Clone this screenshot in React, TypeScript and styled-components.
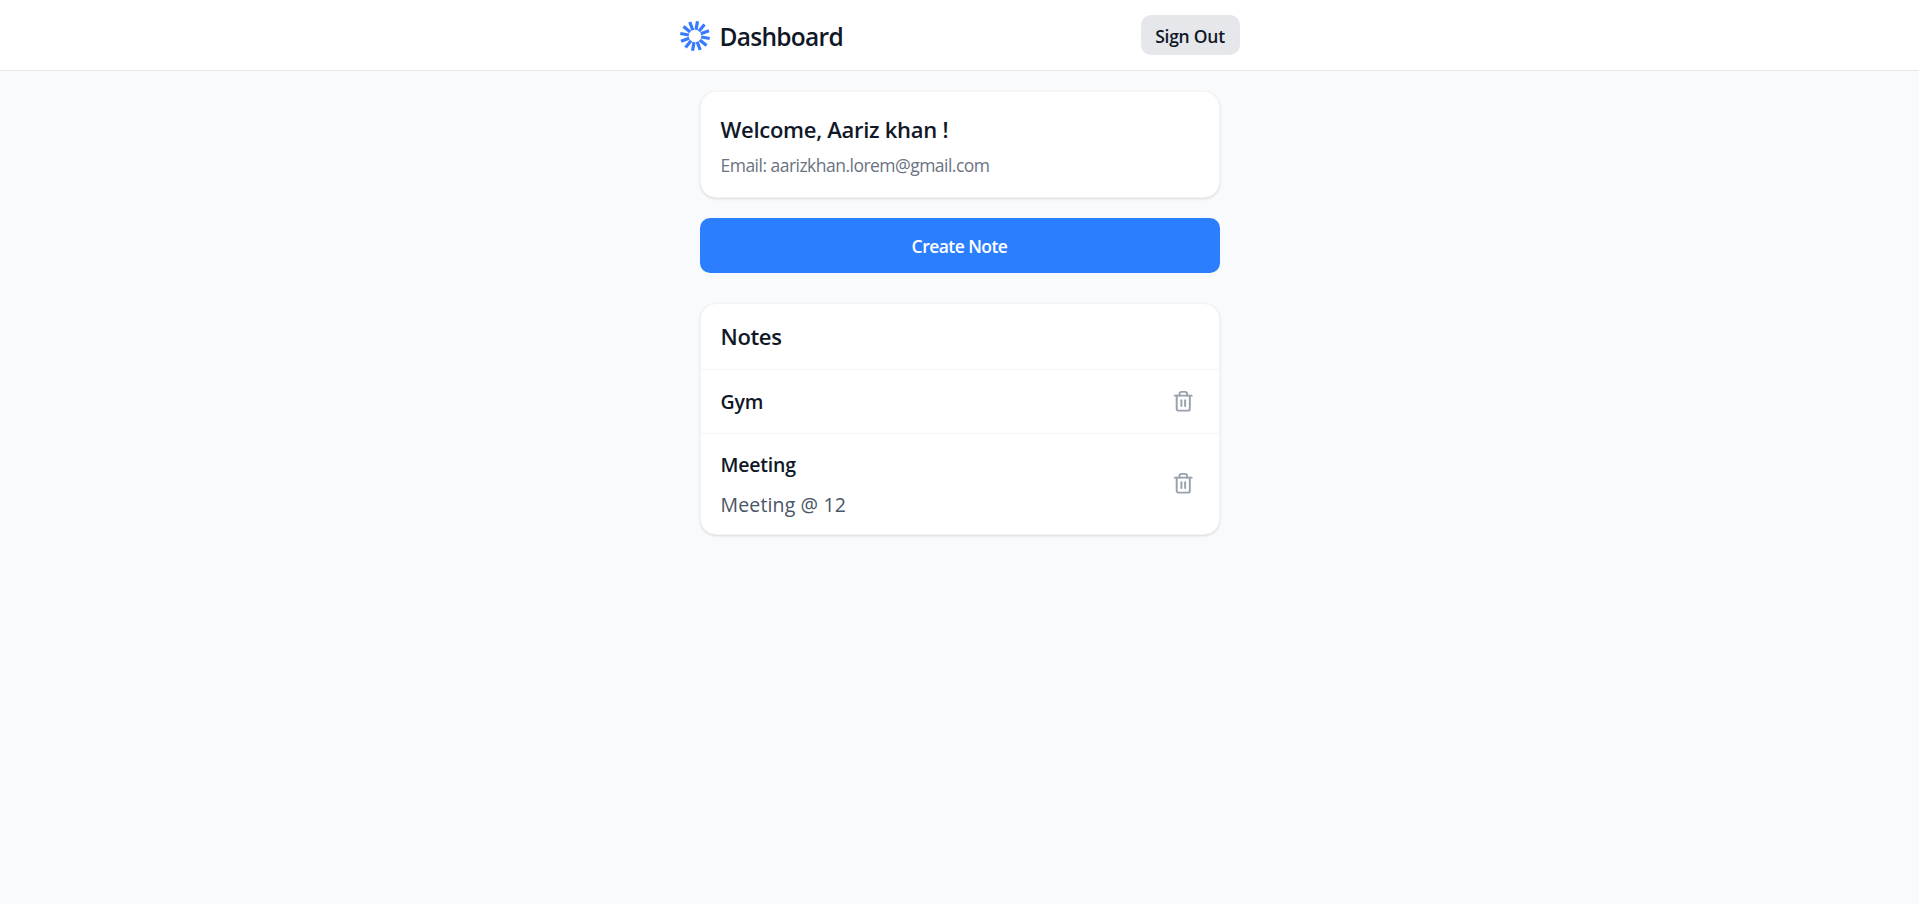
import React from "react";
import styled, { createGlobalStyle } from "styled-components";
import { Trash2 } from "lucide-react";

const GlobalStyle = createGlobalStyle`
  *, *::before, *::after { box-sizing: border-box; }
  body {
    margin: 0;
    background: #f9fafb;
    color: #101828;
    font-family: "Segoe UI", "Open Sans", "Noto Sans", sans-serif;
  }
  h1, h2, h3, p, ul { margin: 0; padding: 0; }
  button { font: inherit; border: 0; cursor: pointer; }
`;

const Page = styled.div`
  min-height: 100vh;
`;

const Header = styled.header`
  background: #fff;
  border-bottom: 1px solid #e5e7eb;
`;

const HeaderInner = styled.div`
  width: 560px;
  height: 70px;
  margin: 0 auto;
  display: flex;
  align-items: center;
  justify-content: space-between;
`;

const Brand = styled.div`
  display: flex;
  align-items: center;
  gap: 10px;
  padding-top: 2px;
`;

const Title = styled.h1`
  padding-top: 2px;
  font-size: 24.5px;
  line-height: 36px;
  font-weight: 600;
  letter-spacing: -0.72px;
`;

const SignOutButton = styled.button`
  width: 99px;
  height: 40px;
  padding: 2px 0 0;
  border-radius: 10px;
  background: #e5e7eb;
  color: #101828;
  font-size: 17.5px;
  font-weight: 600;
  letter-spacing: -0.25px;
`;

const Main = styled.main`
  width: 560px;
  margin: 0 auto;
  padding: 20px;
  display: flex;
  flex-direction: column;
`;

const Card = styled.section`
  background: #fff;
  border: 1px solid #f3f4f6;
  border-radius: 16px;
  box-shadow: 0 1px 3px rgba(0, 0, 0, 0.1), 0 1px 2px -1px rgba(0, 0, 0, 0.1);
  overflow: hidden;
`;

const WelcomeCard = styled(Card)`
  height: 107px;
  padding: 20px;
`;

const Welcome = styled.h2`
  font-size: 22px;
  line-height: 34px;
  font-weight: 600;
  letter-spacing: -0.28px;
`;

const Email = styled.p`
  margin-top: 6px;
  font-size: 17.5px;
  line-height: 27px;
  letter-spacing: -0.52px;
  color: #6a7282;
`;

const CreateButton = styled.button`
  height: 55px;
  margin: 20px 0 30px;
  padding: 1px 0 0;
  border-radius: 10px;
  background: #2b7fff;
  color: #fff;
  font-size: 17.5px;
  font-weight: 600;
  letter-spacing: -0.55px;
`;

const NotesHeading = styled.h2`
  height: 65px;
  padding: 0 20px 2px;
  display: flex;
  align-items: center;
  font-size: 22px;
  font-weight: 600;
  letter-spacing: -0.35px;
`;

const NoteList = styled.ul`
  list-style: none;
`;

const NoteRow = styled.li`
  display: flex;
  align-items: center;
  justify-content: space-between;
  padding: 15px 20px;
  border-top: 1px solid #f3f4f6;
`;

const NoteTitle = styled.h3<{ $alone: boolean }>`
  padding: ${({ $alone }) => ($alone ? "1px 0 0" : "0 0 1px")};
  font-size: 19.5px;
  line-height: 32px;
  font-weight: 600;
  letter-spacing: -0.22px;
`;

const NoteBody = styled.p`
  margin-top: 9px;
  font-size: 19.5px;
  line-height: 28px;
  letter-spacing: 0.15px;
  color: #4a5565;
`;

const DeleteButton = styled.button`
  display: flex;
  padding: 4.5px 4px 5.5px;
  background: transparent;
  color: #99a1af;
`;

const RAYS = Array.from({ length: 12 }, (_, i) => 9.5 + i * 30);

const Logo = () => (
  <svg width="30" height="30" viewBox="0 0 30 30" aria-hidden="true">
    {RAYS.map((angle) => (
      <line
        key={angle}
        x1="15"
        y1="0.1"
        x2="15"
        y2="8.8"
        stroke="#367aff"
        strokeWidth="3.2"
        transform={`rotate(${angle} 15 15)`}
      />
    ))}
  </svg>
);

const notes = [
  { title: "Gym", body: "" },
  { title: "Meeting", body: "Meeting @ 12" },
];

export default function App() {
  return (
    <Page>
      <GlobalStyle />
      <Header>
        <HeaderInner>
          <Brand>
            <Logo />
            <Title>Dashboard</Title>
          </Brand>
          <SignOutButton>Sign Out</SignOutButton>
        </HeaderInner>
      </Header>
      <Main>
        <WelcomeCard>
          <Welcome>Welcome, Aariz khan !</Welcome>
          <Email>Email: aarizkhan.lorem@gmail.com</Email>
        </WelcomeCard>
        <CreateButton>Create Note</CreateButton>
        <Card>
          <NotesHeading>Notes</NotesHeading>
          <NoteList>
            {notes.map((note) => (
              <NoteRow key={note.title}>
                <div>
                  <NoteTitle $alone={!note.body}>{note.title}</NoteTitle>
                  {note.body && <NoteBody>{note.body}</NoteBody>}
                </div>
                <DeleteButton aria-label={`Delete ${note.title}`}>
                  <Trash2 size={22.5} strokeWidth={2.1} />
                </DeleteButton>
              </NoteRow>
            ))}
          </NoteList>
        </Card>
      </Main>
    </Page>
  );
}
